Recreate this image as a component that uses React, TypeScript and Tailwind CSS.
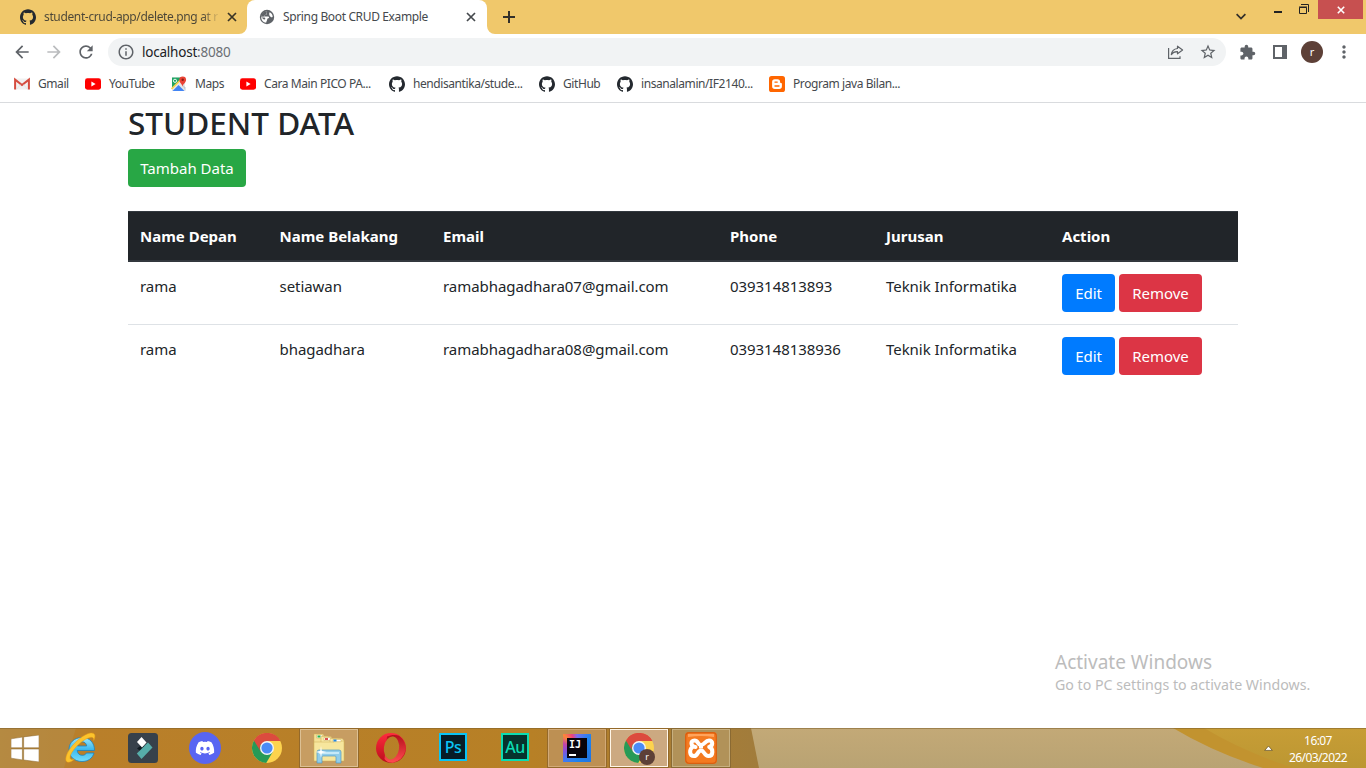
import React from "react";
import {
  MdArrowBack,
  MdArrowForward,
  MdRefresh,
  MdInfoOutline,
  MdStarBorder,
  MdExtension,
  MdMoreVert,
} from "react-icons/md";
import { SiGithub } from "react-icons/si";
import { FaDiscord } from "react-icons/fa";

function YouTube() {
  return (
    <svg width="16" height="16" viewBox="0 0 16 16">
      <rect x="0" y="2.3" width="16" height="11.4" rx="2.4" fill="#f00" />
      <path d="M6.4 5.6 10.6 8 6.4 10.4z" fill="#fff" />
    </svg>
  );
}

function Gmail() {
  return (
    <svg width="16" height="16" viewBox="0 0 16 16">
      <rect x="1" y="2.5" width="14" height="11" fill="#f1f1f1" />
      <path d="M1.1 13.4V3.6L8 9l6.9-5.4v9.8" fill="none" stroke="#d54c3f" strokeWidth="2" />
      <path d="M2.5 13.4 6.5 8.5M13.5 13.4 9.5 8.5" stroke="#ddd" strokeWidth=".6" />
    </svg>
  );
}

function Maps() {
  return (
    <svg width="16" height="16" viewBox="0 0 16 16">
      <path d="M1 1.5h13V15H1z" fill="#e8e8e8" />
      <path d="M1 1.5h11L1 12.5z" fill="#1fa463" />
      <path d="m1.5 15 6-6 6 6z" fill="#4285f4" />
      <path d="m10.5 7.5 4 4V15z" fill="#c5c9cc" />
      <path d="M.5 13 12 1.5" stroke="#fbd24d" strokeWidth="1.6" />
      <circle cx="4" cy="4.8" r="1.6" fill="none" stroke="#fff" strokeWidth=".9" />
      <path d="M11.5 11c0-3-3.2-4-3.2-7.2a3.4 3.4 0 0 1 6.8 0C15.1 7 11.5 8 11.5 11z" fill="#ea4335" />
      <circle cx="11.7" cy="3.8" r="1.2" fill="#8c1d14" />
    </svg>
  );
}

function Blogger() {
  return (
    <svg width="16" height="16" viewBox="0 0 16 16">
      <rect width="16" height="16" rx="2.6" fill="#ff6600" />
      <path
        d="M5.8 3.2h2.7a2.6 2.6 0 0 1 2.6 2.6c0 .9.3 1.2 1 1.2.5 0 .8.3.8.8v2.5a2.7 2.7 0 0 1-2.7 2.7H5.8a2.7 2.7 0 0 1-2.7-2.7V5.9a2.7 2.7 0 0 1 2.7-2.7z"
        fill="#fff"
      />
      <path d="M6 6.1h2.2M6 10h4" stroke="#ff6600" strokeWidth="1.4" strokeLinecap="round" />
    </svg>
  );
}

function Globe() {
  return (
    <svg width="16" height="16" viewBox="0 0 16 16">
      <circle cx="8" cy="8" r="7.2" fill="#5f6368" />
      <path
        d="M9 2.2c-1.900.3-2.300 1.300-1.500 2.300.6.9-.4 1.500-1.300 1.600-.9.200-.7 1.400.2 1.400h2.800c1 0 1.200 1.600.1 1.800-1.200.2-1 1.200-1.300 2-.2.900-.9 1.500-.8 2.400-2.900-.3-5-2.500-5-5.500l2.400 2.100c.6.5 1.700.4 1.700-.5 0-.900-.6-1.400-1.500-1.400H2.300C2.600 5.200 5 2.200 9 2.200z"
        fill="#fff"
      />
      <path d="M2.300 7.800C2.200 5 4.500 2.500 7.600 2.200c-.8.900-.7 1.700-.2 2.400.4.900-.5 1.300-1.300 1.500-.8.100-.6 1-.2 1.500z" fill="#5f6368" />
      <path d="M10.600 3.200c1.900.9 3 2.500 3.100 4.500-.7.800-1.500.800-2.100.1-.7-.800-2.200-2.200-1-4.600z" fill="#fff" />
    </svg>
  );
}

function Cross({ size = 10, stroke = 1.7 }: { size?: number; stroke?: number }) {
  return (
    <svg width={size} height={size} viewBox="0 0 10 10" fill="none" stroke="currentColor" strokeWidth={stroke}>
      <path d="m1 1 8 8M9 1 1 9" />
    </svg>
  );
}

const bookmarks: { label: string; icon: React.ReactNode; width: string }[] = [
  { label: "Gmail", icon: <Gmail />, width: "w-[71px]" },
  { label: "YouTube", icon: <YouTube />, width: "w-[86px]" },
  { label: "Maps", icon: <Maps />, width: "w-[69px]" },
  { label: "Cara Main PICO PA...", icon: <YouTube />, width: "w-[149px]" },
  { label: "hendisantika/stude...", icon: <SiGithub size={16} color="#24292f" />, width: "w-[150px]" },
  { label: "GitHub", icon: <SiGithub size={16} color="#24292f" />, width: "w-[78px]" },
  { label: "insanalamin/IF2140...", icon: <SiGithub size={16} color="#24292f" />, width: "w-[152px]" },
  { label: "Program java Bilan...", icon: <Blogger />, width: "w-[150px]" },
];

function TabStrip() {
  return (
    <div className="flex h-[34px] bg-[#f0c86b] text-[12px] tracking-[-0.36px] text-[#45494d]">
      <div className="flex w-[247px] items-center pl-5">
        <SiGithub size={16} color="#24292f" />
        <span className="ml-2 w-[176px] whitespace-nowrap bg-gradient-to-r from-[#4a4537] from-90% to-transparent bg-clip-text text-transparent">
          student-crud-app/delete.png at r
        </span>
        <span className="ml-[7px] text-[#3a3526]">
          <Cross />
        </span>
      </div>
      <div className="relative flex w-[240px] items-center rounded-t-[8px] bg-white pl-3">
        <svg className="absolute bottom-0 -left-2" width="8" height="8">
          <path d="M8 0v8H0a8 8 0 0 0 8-8" fill="#fff" />
        </svg>
        <svg className="absolute -right-2 bottom-0" width="8" height="8">
          <path d="M0 0v8h8a8 8 0 0 1-8-8" fill="#fff" />
        </svg>
        <Globe />
        <span className="ml-2 w-[183px] whitespace-nowrap">Spring Boot CRUD Example</span>
        <Cross />
      </div>
      <div className="flex w-11 items-center justify-center text-[#33302a]">
        <svg width="12" height="12" stroke="currentColor" strokeWidth="2">
          <path d="M6 0v12M0 6h12" />
        </svg>
      </div>
      <div className="ml-auto flex text-[#33302a]">
        <svg className="mt-[13px] mr-7" width="10" height="8" fill="none" stroke="currentColor" strokeWidth="1.8">
          <path d="m.6 1.2 4.4 4.4 4.4-4.4" />
        </svg>
        <svg className="mt-[11px] mr-[17px]" width="8" height="2">
          <path d="M0 0h8v2H0z" fill="#222" />
        </svg>
        <svg className="mt-1 mr-[9px]" width="10" height="10" fill="none" stroke="#222">
          <path d="M.5 3.5h7v6h-7zM0 3h8M2 .5h7.5V8" />
        </svg>
        <div className="mr-[3px] flex h-[19px] w-[45px] items-center justify-center bg-[#c75050] text-white">
          <Cross size={8} stroke={2} />
        </div>
      </div>
    </div>
  );
}

function Toolbar() {
  return (
    <div className="flex h-9 items-center bg-white pl-3 text-[#5f6368]">
      <MdArrowBack size={20} />
      <MdArrowForward size={20} className="ml-3 text-[#babcbe]" />
      <MdRefresh size={20} className="ml-3" />
      <div className="ml-3 flex h-7 w-[1118px] items-center rounded-full bg-[#f1f3f4] pl-[9px] text-[13.5px] tracking-[-0.22px]">
        <MdInfoOutline size={18} />
        <span className="ml-[7px] text-[#202124]">
          localhost<span className="text-[#6b6f74]">:8080</span>
        </span>
        <svg className="ml-auto" width="16" height="14" viewBox="0 0 16 14" fill="none" stroke="currentColor" strokeWidth="1.2">
          <path d="M.6 3v10.400H12v-2.200" />
          <path d="M9.500 1.200 14.600 5 9.500 8.800V6.700C6.700 6.600 4.700 7.400 3.300 9.600 3.700 6.200 5.700 3.900 9.500 3.500z" strokeLinejoin="round" />
        </svg>
        <MdStarBorder size={18} className="mr-[9px] ml-[15px]" />
      </div>
      <MdExtension size={17} className="ml-[13px]" />
      <svg className="ml-[17px]" width="14" height="14">
        <path d="M0 0h14v14H0z" fill="#5f6368" />
        <path d="M2 2h7v10H2z" fill="#fff" />
      </svg>
      <span className="ml-[14px] flex h-[22px] w-[22px] items-center justify-center rounded-full bg-[#5d4037] pb-px text-[11px] leading-none text-white">
        r
      </span>
      <MdMoreVert size={20} className="ml-[11px]" />
    </div>
  );
}

function Bookmarks() {
  return (
    <div className="flex h-[33px] items-center border-b border-[#d9dbde] pb-[4px] pl-[14px] text-[12px] tracking-[-0.42px] text-[#45494d]">
      {bookmarks.map((b) => (
        <div key={b.label} className={`flex shrink-0 items-center whitespace-nowrap ${b.width}`}>
          {b.icon}
          <span className="ml-2">{b.label}</span>
        </div>
      ))}
    </div>
  );
}

const headers = ["Name Depan", "Name Belakang", "Email", "Phone", "Jurusan", "Action"];
const students = [
  ["rama", "setiawan", "ramabhagadhara07@gmail.com", "039314813893", "Teknik Informatika"],
  ["rama", "bhagadhara", "ramabhagadhara08@gmail.com", "0393148138936", "Teknik Informatika"],
];

function StudentPage() {
  return (
    <main className="mx-auto w-[1110px] flex-1 text-[15px] leading-6 text-[#212529]">
      <h1 className="mt-px h-[38px] text-[31.5px] leading-[38px] font-medium">STUDENT DATA</h1>
      <button className="mt-[7px] flex h-[38px] w-[118px] items-center justify-center rounded bg-[#28a745] text-white">
        Tambah Data
      </button>
      <table className="mt-6 w-full table-fixed border-separate border-spacing-0 text-left">
        <colgroup>
          <col className="w-[139.5px]" />
          <col className="w-[163.5px]" />
          <col className="w-[287px]" />
          <col className="w-[156px]" />
          <col className="w-[176px]" />
          <col className="w-[188px]" />
        </colgroup>
        <thead>
          <tr className="bg-[#212529] text-white">
            {headers.map((h) => (
              <th key={h} className="border-t border-b-2 border-[#32383e] px-3 py-3 font-bold">
                {h}
              </th>
            ))}
          </tr>
        </thead>
        <tbody className="tracking-[-0.05px]">
          {students.map((row, i) => (
            <tr key={row[2]}>
              {row.map((cell) => (
                <td key={cell} className={`p-3 align-top ${i > 0 ? "border-t border-[#dee2e6]" : ""}`}>
                  {cell}
                </td>
              ))}
              <td className={`p-3 align-top ${i > 0 ? "border-t border-[#dee2e6]" : ""}`}>
                <div className="flex gap-1 text-white">
                  <button className="h-[38px] w-[53px] rounded bg-[#007bff]">Edit</button>
                  <button className="h-[38px] w-[83px] rounded bg-[#dc3545]">Remove</button>
                </div>
              </td>
            </tr>
          ))}
        </tbody>
      </table>
    </main>
  );
}

function Chrome() {
  return (
    <svg width="30" height="30" viewBox="0 0 30 30">
      <circle cx="15" cy="15" r="15" fill="#fdd34e" />
      <path d="M15 15 2 7.5A15 15 0 0 0 14.2 30L21 18.5z" fill="#279a57" />
      <path d="M2 7.5A15 15 0 0 1 28.3 8H15L9 19z" fill="#dc4b3e" />
      <path d="m2 7.5 6.6 11.2L15 15z" fill="#279a57" />
      <path d="M2 7.5 8.4 18A7 7 0 0 1 15 8h13.3A15 15 0 0 0 2 7.5z" fill="#dc4b3e" />
      <circle cx="15" cy="15" r="7" fill="#f5f5f5" />
      <circle cx="15" cy="15" r="5.6" fill="#4b8bf5" />
    </svg>
  );
}

function InternetExplorer() {
  return (
    <svg width="32" height="32" viewBox="0 0 32 32">
      <defs>
        <linearGradient id="ie" x2="0" y2="1">
          <stop stopColor="#9ce6fc" />
          <stop offset=".5" stopColor="#3cb9ee" />
          <stop offset="1" stopColor="#73dcfa" />
        </linearGradient>
      </defs>
      <path
        d="M29.5 18.5H12.2c.3 3 2.2 4.8 5 4.8 2 0 3.5-.8 4.2-2.3H29c-1.5 5.3-6 8.5-12 8.5C9.300 29.500 4 24.500 4 17.500S9.500 5.500 17 5.500s12.700 5.200 12.500 13zM12.300 14h9.400c-.3-2.500-2-4.200-4.600-4.200s-4.400 1.600-4.800 4.200z"
        fill="url(#ie)"
        stroke="#1d82bd"
        strokeWidth=".8"
      />
      <path
        d="M9.500 27C5 31.500.3 31.500.8 26.500 1.600 17.500 15 3.500 24.500 1.200c5.500-1.200 6.800 2.300 4.200 7.300.3-3.300-1.800-3.800-5.200-2.600C15 9 5.500 20 5 25c-.2 2.700 1.800 3.200 4.500 2z"
        fill="#fcc42c"
        stroke="#e69a14"
        strokeWidth=".5"
      />
    </svg>
  );
}

function Filmora() {
  return (
    <svg width="30" height="30" viewBox="0 0 30 30">
      <rect width="30" height="30" rx="3.500" fill="#37414b" />
      <path d="m9 15.500 4.500-3.500 4.500 2-4.500 5z" fill="#101b22" />
      <path d="m13.500 4 5 5.500-4.500 5-5-5.500z" fill="#fff" />
      <path d="m20 9.500 4.500 5-11 11.500-4.700-5.500z" fill="#56ada9" />
    </svg>
  );
}

function Folder() {
  return (
    <svg width="32" height="32" viewBox="0 0 32 32">
      <g stroke="#cfae57" strokeWidth=".5">
        <path d="M1 2h9l1 2h4v22H1z" fill="#f5e196" />
        <path d="M3.500 3h6v3h-6z" fill="#fff" />
        <path d="M8 4.500h10l1 2h6V28H8z" fill="#f8e8a3" />
        <path d="M11 5.500h7v3h-7z" fill="#fff" />
        <path d="M17 6.500h12l2 2V28H17z" fill="#f9eaaa" />
        <path d="M1 10h20l1-1h9v20H1z" fill="#f7e69d" />
        <path d="M20 7.500h8v2.200h-8z" fill="#fff" />
      </g>
      <path d="M4.500 3.500h3v2h-3z" fill="#26b34b" />
      <path d="M12 6h3v2h-3z" fill="#d9534f" />
      <path d="M20.500 7.500h3v2h-3z" fill="#2389dc" />
      <path d="M4 31V20q0-2 2-2h20q2 0 2 2v11h-5v-6q0-1-1-1H10q-1 0-1 1v6z" fill="#91cdea" stroke="#5599bd" strokeWidth=".7" />
      <path d="M6 20h20v2H6z" fill="#c6e9f8" />
      <path d="m8 14 .8 5 4.700 1-4.700 1-.8 5-.8-5-4.700-1 4.700-1z" fill="#fff" />
    </svg>
  );
}

function Opera() {
  return (
    <svg width="30" height="30" viewBox="0 0 30 30">
      <defs>
        <linearGradient id="opera" x2="0" y2="1">
          <stop stopColor="#ff2b3d" />
          <stop offset="1" stopColor="#b90e1b" />
        </linearGradient>
        <linearGradient id="operaSide" x2="0" y2="1">
          <stop stopColor="#b5101c" />
          <stop offset="1" stopColor="#ff4b50" />
        </linearGradient>
      </defs>
      <mask id="operaHole">
        <path d="M0 0h30v30H0z" fill="#fff" />
        <ellipse cx="15.500" cy="15" rx="7.600" ry="11.500" transform="rotate(8 15.500 15)" fill="#000" />
      </mask>
      <g mask="url(#operaHole)">
        <circle cx="15" cy="15" r="15" fill="url(#opera)" />
        <path d="M11 3.500c4-2 9-2 12-.800A15 15 0 0 1 17 29.800c-4 .2-7-1.300-8.500-3.800z" fill="url(#operaSide)" />
      </g>
    </svg>
  );
}

function Photoshop() {
  return (
    <span className="relative -top-px flex h-7 w-7 items-center justify-center border-2 border-[#0ac4f5] bg-[#071d27] text-[16px] leading-none font-medium tracking-[-0.5px] text-[#0ac4f5]">
      Ps
    </span>
  );
}

function Audition() {
  return (
    <span className="relative -top-px flex h-7 w-7 items-center justify-center border-2 border-[#0cdcb2] bg-[#06332d] text-[16px] leading-none font-medium tracking-[-0.5px] text-[#0cdcb2]">
      Au
    </span>
  );
}

function IntelliJ() {
  return (
    <span className="flex h-7 w-7 items-center justify-center bg-[conic-gradient(from_0deg,#7a6ef0,#1d83ef_14%,#2175e2_35%,#1d83ef_50%,#3f7bf0_62%,#8a4fd8_72%,#c545a8_80%,#fc8937_87%,#f0407c_94%,#7a6ef0)]">
      <span className="flex h-5 w-5 flex-col bg-[#08040c] pt-[2px] pl-[2px] font-['DejaVu_Sans_Mono'] text-[10px] leading-[10px] font-bold text-white">
        IJ
        <span className="mt-[4px] h-[2px] w-[7px] bg-white" />
      </span>
    </span>
  );
}

function Xampp() {
  return (
    <svg width="32" height="32" viewBox="0 0 32 32">
      <rect width="32" height="32" rx="4" fill="#f47a20" />
      <rect x=".7" y=".7" width="30.600" height="30.600" rx="3.500" fill="none" stroke="#d95f10" strokeWidth="1.200" />
      <path d="M3 2h26v3q-13-2-26 0z" fill="#ffa45c" />
      <path
        d="M10.500 15C5.500 14.500 5 8.500 9.500 8.500c4 0 3 4.500 6.500 4.500s4-4.500 8-4.500c4.500 0 4 5.500.2 6.500 4.300 1.500 4.300 9-.7 9-4.500 0-4-5.500-7.500-5.500-3.500 0-3 5.500-7 5.500-5 0-4.500-6.500-2-8.500"
        fill="none"
        stroke="#fff"
        strokeWidth="4"
        strokeLinecap="round"
        strokeLinejoin="round"
      />
      <path d="M14 15h4" stroke="#fff" strokeWidth="3" />
    </svg>
  );
}

const apps: { name: string; icon: React.ReactNode; frame: string }[] = [
  { name: "ie", icon: <InternetExplorer />, frame: "border-transparent" },
  { name: "filmora", icon: <Filmora />, frame: "border-transparent" },
  {
    name: "discord",
    icon: (
      <span className="flex h-8 w-8 items-center justify-center rounded-full bg-[#5865f2] text-white">
        <FaDiscord size={20} />
      </span>
    ),
    frame: "border-transparent",
  },
  { name: "chrome", icon: <Chrome />, frame: "border-transparent" },
  { name: "files", icon: <Folder />, frame: "border-[#dcc094] bg-[#c79d62] outline outline-[#94692a]" },
  { name: "opera", icon: <Opera />, frame: "border-transparent" },
  { name: "photoshop", icon: <Photoshop />, frame: "border-transparent" },
  { name: "audition", icon: <Audition />, frame: "border-transparent" },
  { name: "intellij", icon: <IntelliJ />, frame: "border-[#d2aa78] bg-[#bd9053] outline outline-[#94692a]" },
  {
    name: "browser",
    icon: (
      <span className="relative">
        <Chrome />
        <span className="absolute -right-[1px] -bottom-[2px] flex h-4 w-4 items-center justify-center rounded-full bg-[#5d4037] pb-px text-[9px] leading-none text-white">
          r
        </span>
      </span>
    ),
    frame: "border-[#fff6e8] bg-[#cca981] outline outline-[#94692a]",
  },
  { name: "xampp", icon: <Xampp />, frame: "border-[#c7b080] bg-[#b19259] outline outline-[#8a6a33]" },
];

function Taskbar() {
  return (
    <footer className="relative flex h-10 shrink-0">
      <svg className="absolute inset-0" width="1366" height="40">
        <defs>
          <linearGradient id="wood">
            <stop stopColor="#b8893b" />
            <stop offset=".1" stopColor="#b97f2a" />
            <stop offset=".7" stopColor="#b78026" />
            <stop offset="1" stopColor="#a17c3c" />
          </linearGradient>
          <linearGradient id="sand" x2="0" y2="1">
            <stop stopColor="#c3a977" />
            <stop offset="1" stopColor="#b9a373" />
          </linearGradient>
          <linearGradient id="gold" x2="0" y2="1">
            <stop stopColor="#c79d36" />
            <stop offset="1" stopColor="#bc9732" />
          </linearGradient>
        </defs>
        <path d="M0 0h760v40H0z" fill="url(#wood)" />
        <path d="M0 0h76L64 40H0z" fill="#b48a45" opacity=".65" />
        <path d="M751 0h615v40H759z" fill="url(#sand)" />
        <path d="M1173 0h193v40H1263Q1213 24 1173 0z" fill="#c2932f" />
        <path d="M1204 0h162v40h-72Q1244 24 1204 0z" fill="url(#gold)" />
        <path d="M0 .5h1366" stroke="#80602c" strokeOpacity=".55" />
      </svg>
      <div className="relative flex w-[50px] items-center pl-[11px]">
        <svg width="28" height="27" viewBox="0 0 27 26" fill="#fff" stroke="#8b682f" strokeWidth=".5">
          <path d="M0 3.700 11 2v10.300H0zM12.200 1.800 27 0v12.300H12.200zM0 13.500h11V24L0 22.300zM12.200 13.500H27V26l-14.800-1.900z" />
        </svg>
      </div>
      {apps.map((a) => (
        <div key={a.name} className="relative flex w-[62px] shrink-0 justify-center pt-[1px]">
          <div className={`flex h-[38px] w-[58px] items-center justify-center border ${a.frame}`}>{a.icon}</div>
        </div>
      ))}
      <div className="relative ml-auto flex items-center pr-[18px] text-center text-[12px] leading-[17px] tracking-[-0.58px] whitespace-nowrap text-white">
        <svg className="mr-[15px]" width="9" height="6">
          <path d="M.7 5.400h7.600L4.500 1z" fill="#fff" stroke="#5d4b20" strokeWidth=".7" />
        </svg>
        <div className="w-[60px] pt-px">
          <p>16:07</p>
          <p>26/03/2022</p>
        </div>
      </div>
    </footer>
  );
}

export default function App() {
  return (
    <div className="relative flex h-[768px] w-[1366px] flex-col overflow-hidden bg-white font-['Noto_Sans','Open_Sans',sans-serif]">
      <TabStrip />
      <Toolbar />
      <Bookmarks />
      <StudentPage />
      <div className="absolute top-[650px] left-[1055px] whitespace-nowrap text-[#bcbcbc]">
        <p className="text-[19px] leading-6">Activate Windows</p>
        <p className="text-[14.2px] leading-[21px]">Go to PC settings to activate Windows.</p>
      </div>
      <Taskbar />
    </div>
  );
}
